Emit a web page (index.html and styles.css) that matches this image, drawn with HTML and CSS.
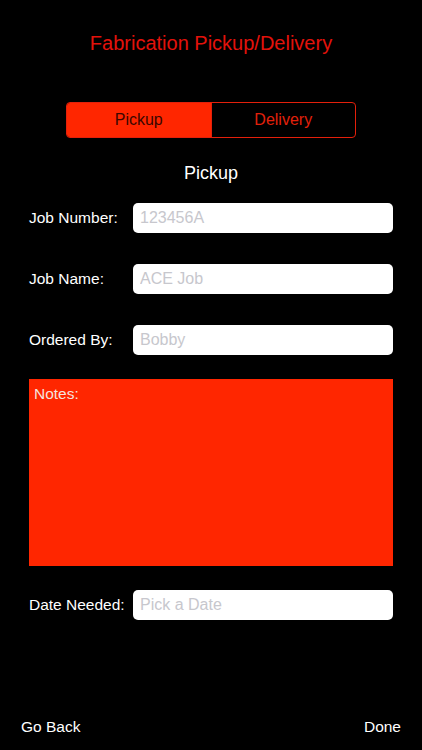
FILE: index.html
```html
<!DOCTYPE html>
<html lang="en">
<head>
    <meta charset="UTF-8">
    <title>Fabrication Pickup/Delivery</title>
    <meta name="viewport" content="width=device-width">
    <link rel="stylesheet" href="styles.css">
</head>
<body>
    <main class="screen">
        <h1 class="title">Fabrication Pickup/Delivery</h1>
        <div class="segmented">
            <button class="segment active" type="button">Pickup</button>
            <button class="segment" type="button">Delivery</button>
        </div>
        <h2 class="subtitle">Pickup</h2>
        <form class="fields">
            <label class="row">
                <span class="label">Job Number:</span>
                <input class="field" type="text" placeholder="123456A">
            </label>
            <label class="row">
                <span class="label">Job Name:</span>
                <input class="field" type="text" placeholder="ACE Job">
            </label>
            <label class="row">
                <span class="label">Ordered By:</span>
                <input class="field" type="text" placeholder="Bobby">
            </label>
            <div class="notes">Notes:</div>
            <label class="row">
                <span class="label">Date Needed:</span>
                <input class="field" type="text" placeholder="Pick a Date">
            </label>
        </form>
        <footer class="toolbar">
            <a href="#">Go Back</a>
            <a href="#">Done</a>
        </footer>
    </main>
</body>
</html>
```

FILE: styles.css
```css
* {
    box-sizing: border-box;
}
body {
    margin: 0;
    background: #000;
    color: #fff;
    font-family: "Liberation Sans", Arial, sans-serif;
}
.screen {
    display: flex;
    flex-direction: column;
    align-items: center;
    min-height: 750px;
}
.title {
    margin: 31px 0 0;
    color: #e3120b;
    font-size: 20px;
    font-weight: normal;
    line-height: 24px;
}
.segmented {
    display: flex;
    margin-top: 47px;
    width: 290px;
    height: 36px;
    border: 1px solid #e3200b;
    border-radius: 4px;
    overflow: hidden;
}
.segment {
    flex: 1;
    margin: 0;
    padding: 0;
    border: 0;
    background: transparent;
    color: #e3200b;
    font: 16px "Liberation Sans", Arial, sans-serif;
}
.segment + .segment {
    border-left: 1px solid #e3200b;
}
.segment.active {
    background: #ff2600;
    color: #3a0600;
}
.subtitle {
    margin: 24px 0 0;
    font-size: 18px;
    font-weight: normal;
    line-height: 22px;
}
.fields {
    display: flex;
    flex-direction: column;
    gap: 31px;
    margin-top: 19px;
    width: 364px;
}
.row {
    display: flex;
    align-items: center;
}
.label {
    width: 104px;
    font-size: 15.5px;
}
.field {
    flex: 1;
    height: 30px;
    padding: 0 7px;
    border: 0;
    border-radius: 5px;
    background: #fff;
    outline: 0;
    font: 16px "Liberation Sans", Arial, sans-serif;
}
.field::placeholder {
    color: #c7c7cd;
}
.notes {
    margin-top: -7px;
    margin-bottom: -7px;
    height: 187px;
    padding: 6px 5px;
    background: #ff2600;
    color: #f5e2de;
    font-size: 15.5px;
}
.toolbar {
    display: flex;
    justify-content: space-between;
    margin-top: auto;
    padding: 0 21px 14px;
    width: 100%;
}
.toolbar a {
    color: #fff;
    text-decoration: none;
    font-size: 15.5px;
}
```
